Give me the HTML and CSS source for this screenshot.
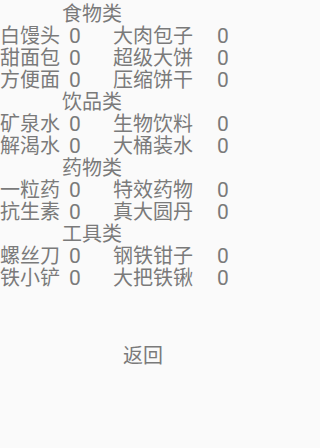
FILE: index.html
```html
<!DOCTYPE html>
<html lang="zh-CN">
<head>
<meta charset="utf-8">
<link rel="stylesheet" href="styles.css">
</head>
<body>
<div class="screen">
  <div class="table">
    <div class="header">食物类</div>
    <div class="row"><span class="name">白馒头</span><span class="num">0</span><span class="name">大肉包子</span><span class="num">0</span></div>
    <div class="row"><span class="name">甜面包</span><span class="num">0</span><span class="name">超级大饼</span><span class="num">0</span></div>
    <div class="row"><span class="name">方便面</span><span class="num">0</span><span class="name">压缩饼干</span><span class="num">0</span></div>
    <div class="header">饮品类</div>
    <div class="row"><span class="name">矿泉水</span><span class="num">0</span><span class="name">生物饮料</span><span class="num">0</span></div>
    <div class="row"><span class="name">解渴水</span><span class="num">0</span><span class="name">大桶装水</span><span class="num">0</span></div>
    <div class="header">药物类</div>
    <div class="row"><span class="name">一粒药</span><span class="num">0</span><span class="name">特效药物</span><span class="num">0</span></div>
    <div class="row"><span class="name">抗生素</span><span class="num">0</span><span class="name">真大圆丹</span><span class="num">0</span></div>
    <div class="header">工具类</div>
    <div class="row"><span class="name">螺丝刀</span><span class="num">0</span><span class="name">钢铁钳子</span><span class="num">0</span></div>
    <div class="row"><span class="name">铁小铲</span><span class="num">0</span><span class="name">大把铁锹</span><span class="num">0</span></div>
  </div>
  <div class="actions"><span class="back">返回</span></div>
</div>
</body>
</html>
```
FILE: styles.css
```css
html, body {
  margin: 0;
  padding: 0;
  background: #fafafa;
}
.screen {
  width: 252px;
  height: 448px;
  box-sizing: border-box;
  padding-top: 3px;
  font-family: Roboto, "Noto Sans CJK SC", sans-serif;
  font-size: 20px;
  line-height: 22px;
  color: #7a7a7a;
}
.table {
  display: flex;
  flex-direction: column;
}
.header {
  padding-left: 62px;
}
.row {
  display: grid;
  grid-template-columns: 69px 44px 104px auto;
}
.name, .num {
  white-space: nowrap;
}
.num {
  font-size: 21px;
}
.actions {
  margin-top: 56px;
  padding-left: 123px;
}
```
